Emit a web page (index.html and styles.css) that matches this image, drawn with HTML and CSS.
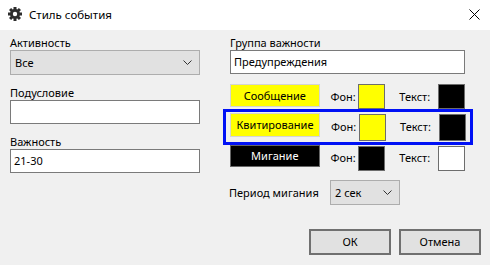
FILE: index.html
```html
<!DOCTYPE html>
<html lang="ru">
<head>
  <meta charset="UTF-8">
  <title>Стиль события</title>
  <link rel="stylesheet" href="styles.css">
</head>
<body>
<div class="window">
  <div class="titlebar">
    <svg class="gear" width="14" height="14" viewBox="0 0 14 14">
      <g fill="#2d2d2d">
        <circle cx="7" cy="7" r="5"/>
        <rect x="5.5" y="0" width="3" height="14"/>
        <rect x="5.5" y="0" width="3" height="14" transform="rotate(45 7 7)"/>
        <rect x="5.5" y="0" width="3" height="14" transform="rotate(90 7 7)"/>
        <rect x="5.5" y="0" width="3" height="14" transform="rotate(135 7 7)"/>
      </g>
      <circle cx="7" cy="7" r="2.2" fill="#fff"/>
    </svg>
    <span class="title">Стиль события</span>
    <svg class="close" width="11" height="11" viewBox="0 0 11 11">
      <path d="M0.5 0.5 L10.5 10.5 M10.5 0.5 L0.5 10.5" stroke="#000" stroke-width="1"/>
    </svg>
  </div>

  <div class="content">
    <div class="cols">
      <div class="col left">
        <div class="field">
          <div class="cap">Активность</div>
          <div class="combo wide">Все
            <svg class="chev" width="9" height="5" viewBox="0 0 9 5"><polyline points="0.5,0.5 4.5,4.5 8.5,0.5" fill="none" stroke="#333"/></svg>
          </div>
        </div>
        <div class="field">
          <div class="cap">Подусловие</div>
          <div class="edit"></div>
        </div>
        <div class="field">
          <div class="cap">Важность</div>
          <div class="edit">21-30</div>
        </div>
      </div>

      <div class="col right">
        <div class="field">
          <div class="cap">Группа важности</div>
          <div class="edit">Предупреждения</div>
        </div>

        <div class="rows">
          <div class="row r1">
            <div class="sample yellow">Сообщение</div>
            <span class="lbl fon">Фон:</span>
            <div class="swatch sw-yellow"></div>
            <span class="lbl txt">Текст:</span>
            <div class="swatch sw-black"></div>
          </div>
          <div class="row sel">
            <div class="sample yellow">Квитирование</div>
            <span class="lbl fon">Фон:</span>
            <div class="swatch sw-yellow"></div>
            <span class="lbl txt">Текст:</span>
            <div class="swatch sw-black"></div>
          </div>
          <div class="row r3">
            <div class="sample black">Мигание</div>
            <span class="lbl fon">Фон:</span>
            <div class="swatch sw-black"></div>
            <span class="lbl txt">Текст:</span>
            <div class="swatch sw-white"></div>
          </div>
        </div>

        <div class="period">
          <span class="period-lbl">Период мигания</span>
          <div class="combo small">2 сек
            <svg class="chev" width="9" height="5" viewBox="0 0 9 5"><polyline points="0.5,0.5 4.5,4.5 8.5,0.5" fill="none" stroke="#333"/></svg>
          </div>
        </div>
      </div>
    </div>

    <div class="footer">
      <div class="btn">ОК</div>
      <div class="btn">Отмена</div>
    </div>
  </div>
</div>
</body>
</html>
```

FILE: styles.css
```css
body { margin: 0; background: #f0f0f0; font-family: "Noto Sans", "Liberation Sans", sans-serif; font-size: 11px; color: #000; }
.window { width: 490px; height: 265px; background: #f0f0f0; overflow: hidden; }

.titlebar { height: 30px; background: #fff; display: flex; align-items: center; }
.gear { margin-left: 8px; margin-top: -2px; }
.title { margin-left: 7px; font-size: 11.5px; margin-top: -1px; }
.close { margin-left: auto; margin-right: 10px; margin-top: -2px; }

.content { padding: 6px 0 0 0; }
.cols { display: flex; gap: 30px; }
.col.left { width: 190px; margin-left: 10px; }
.col.right { width: 235px; }

.field { margin-bottom: 11px; }
.cap { height: 14px; line-height: 14px; }

.edit { height: 24px; box-sizing: border-box; border: 1px solid #7a7a7a; background: #fff; padding: 0 3px; line-height: 22px; }
.combo { height: 25px; box-sizing: border-box; border: 1px solid #adadad; background: #e1e1e1; padding: 0 4px; line-height: 23px; display: flex; align-items: center; }
.combo .chev { margin-left: auto; margin-right: 3px; }
.combo.small { width: 70px; }

.right .field { margin-bottom: 10px; }

.row { display: flex; align-items: flex-start; }
.sample { width: 90px; box-sizing: border-box; text-align: center; }
.sample.yellow { background: #ffff00; border: 1px solid #d4d4d4; }
.sample.black { background: #000; color: #fff; border: 1px solid #666; }
.lbl { line-height: 25px; }
.lbl.fon { margin-left: 11px; width: 28px; }
.lbl.txt { margin-left: 14px; width: 39px; }
.swatch { width: 27px; height: 25px; box-sizing: border-box; border: 1px solid #6d6d6d; }
.sw-yellow { background: #ffff00; }
.sw-black { background: #000; }
.sw-white { background: #fff; }

.r1 { height: 25px; }
.r1 .sample { height: 23px; line-height: 21px; }

.sel { border: 3px solid #0011f5; margin-left: -7px; width: 250px; box-sizing: border-box; height: 36px; padding: 1px 0 0 4px; }
.sel .sample { height: 24px; line-height: 22px; }
.sel .swatch { height: 27px; margin-top: 1px; }
.sel .lbl { line-height: 28px; }

.r3 { height: 26px; }
.r3 .sample { height: 22px; line-height: 20px; }
.r3 .swatch { margin-top: 1px; }
.r3 .lbl { line-height: 26px; }

.period { display: flex; align-items: center; margin-top: 9px; margin-left: -1px; }
.period-lbl { width: 101px; }

.footer { display: flex; justify-content: flex-end; gap: 8px; margin-right: 9px; margin-top: 24px; }
.btn { width: 82px; height: 26px; box-sizing: border-box; border: 2px solid #707070; background: #e1e1e1; text-align: center; line-height: 22px; }
```
